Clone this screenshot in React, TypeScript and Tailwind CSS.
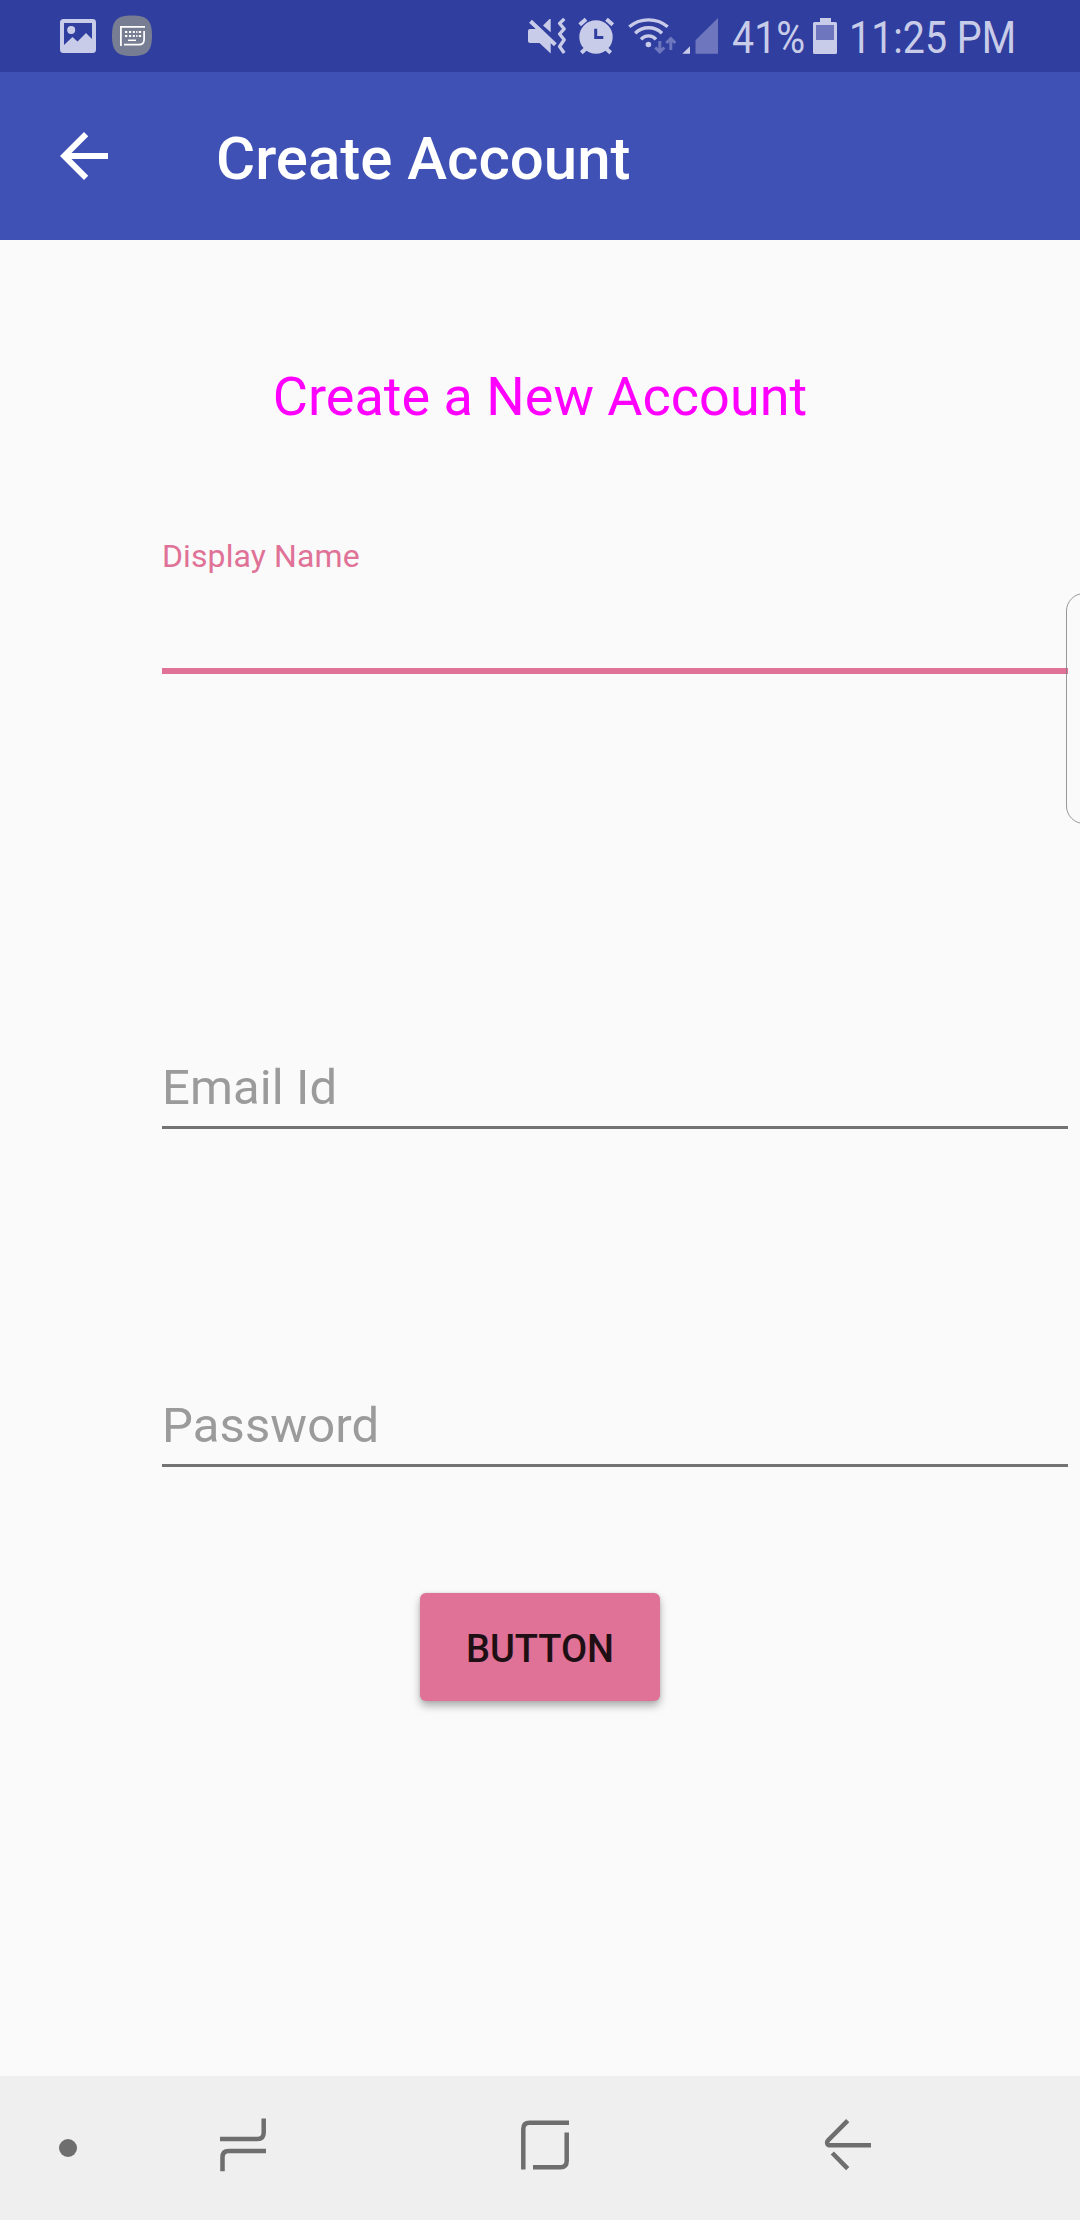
import React from "react";

const LIGHT = "#c9cce8";
const DIM = "#6e77bd";
const BAR = "#303f9f";
const GRAY = "#6e6e6e";

function StatusBar() {
  return (
    <header className="flex h-[72px] items-start bg-[#303f9f] pl-[60px] text-[#c9cce8]">
      <svg className="h-[72px] w-9 shrink-0" viewBox="60 0 36 72">
        <path
          fill={LIGHT}
          fillRule="evenodd"
          d="M63.500 19h29a3.500 3.500 0 0 1 3.500 3.500v27a3.500 3.500 0 0 1-3.500 3.500h-29a3.500 3.500 0 0 1-3.500-3.500v-27a3.500 3.500 0 0 1 3.500-3.500zM64 23v22l8.500-8 5 4.500 8.500-8.500 6 6v-16z"
        />
        <circle cx="71.200" cy="30" r="4" fill={LIGHT} />
      </svg>
      <svg className="ml-4 h-[72px] w-10 shrink-0" viewBox="112 0 40 72">
        <path
          fill="#777d92"
          d="M132 15.600C147 15.600 152 20.500 152 35.700C152 51 147 56 132 56C117 56 112 51 112 35.700C112 20.500 117 15.600 132 15.600Z"
        />
        <g fill="none" stroke="#fff" strokeWidth="1.700">
          <path d="M120.900 46V26.900H145" />
          <path d="M144.100 31v8.500q0 5.200-5.200 5.200H124" />
          <path d="M125 32h2.300m1.700 0h2.100m1.700 0h2m1.400 0h1.200m1.400 0h2.300M125 36h2.300m1.700 0h2.100m1.700 0h2m1.400 0h1.200m1.400 0h2.300" strokeWidth="2" />
          <path d="M128 40.300h8" strokeWidth="1.500" />
        </g>
      </svg>
      <svg className="ml-[374px] h-[72px] w-[40px] shrink-0" viewBox="526 0 40 72">
        <g fill={LIGHT}>
          <path d="M530 29h8.500L555 45.200 550.700 43v10.600L539.500 43H530a2 2 0 0 1-2-2V31a2 2 0 0 1 2-2z" />
          <path d="M543 25.500l6.500-6.600h1.200V32.300z" />
        </g>
        <path d="M530.500 21.200L555.300 44.800" stroke={LIGHT} strokeWidth="4" fill="none" />
        <path d="M564.300 18.800L559.600 23.500 564.200 28.800 559.600 34 564.200 39.800 559.600 46.500 564.200 53" stroke={LIGHT} strokeWidth="3.300" fill="none" strokeLinejoin="round" />
      </svg>
      <svg className="ml-[11px] h-[72px] w-[38px] shrink-0" viewBox="577 0 38 72">
        <circle cx="596" cy="37" r="16.700" fill={LIGHT} />
        <path d="M579.700 24.800l6.300-5.500M612.800 24.800l-6.300-5.500M581.300 52.800l5-4.500M610.700 52.800l-5-4.500" stroke={LIGHT} strokeWidth="4" />
        <path d="M595.700 28.700v8.900h7.600" stroke={BAR} strokeWidth="3" fill="none" />
      </svg>
      <svg className="ml-[12px] h-[72px] w-[50px] shrink-0" viewBox="627 0 50 72">
        <g fill="none" stroke={LIGHT} strokeWidth="3.400">
          <path d="M629.300 26.700a30.300 30.300 0 0 1 38.400 0" />
          <path d="M635.200 33.200a19.300 19.300 0 0 1 26.800 0" />
          <path d="M641 39.300a10 10 0 0 1 15 0" />
        </g>
        <circle cx="648.400" cy="44.500" r="2.800" fill={LIGHT} />
        <path d="M659.800 41v11M655.300 47.500l4.500 4.500 4.500-4.500M670.800 50V39M666.300 43l4.500-4.500 4.500 4.500" stroke={DIM} strokeWidth="3" fill="none" />
      </svg>
      <svg className="ml-[5px] h-[72px] w-9 shrink-0" viewBox="682 0 36 72">
        <path d="M682.300 53.800l7.700-7.500v7.500z" fill={LIGHT} />
        <path d="M695.500 53.800V40.300L718 18v35.800z" fill={DIM} />
      </svg>
      <div className="ml-[14px] h-[72px] w-[74px] origin-left scale-x-[0.875] whitespace-nowrap text-[45px] leading-[75px]">41%</div>
      <svg className="ml-[7px] h-[72px] w-6 shrink-0" viewBox="813 0 24 72">
        <path d="M820 18h11v4h4.500q1.500 0 1.500 1.500v29q0 1.500-1.500 1.500h-21q-1.500 0-1.500-1.500v-29q0-1.500 1.500-1.500h5.500z" fill={LIGHT} />
        <path d="M816 25h18v15h-18z" fill={DIM} />
      </svg>
      <div className="ml-[12px] h-[72px] w-[170px] origin-left scale-x-[0.875] whitespace-nowrap text-[45px] leading-[75px]">11:25 PM</div>
    </header>
  );
}

function Field({ label, className }: { label: string; className: string }) {
  return (
    <div className={`ml-[162px] w-[906px] border-b-[3px] border-[#737373] text-[49px] tracking-[0.1px] text-[#9b9b9b] ${className}`}>
      <div className="h-[82px] leading-[87px]">{label}</div>
    </div>
  );
}

function NavBar() {
  return (
    <nav className="flex h-36 bg-[#efefef] pl-[59px]">
      <svg className="h-36 w-[18px]" viewBox="59 2076 18 144">
        <circle cx="68" cy="2148" r="9" fill={GRAY} />
      </svg>
      <svg className="ml-[143px] h-36 w-[46px]" viewBox="220 2076 46 144" fill="none" stroke={GRAY} strokeWidth="4.500">
        <path d="M220 2139h37.500q6.200 0 6.200-6.200v-14.300M222.500 2171.200v-14q0-6.200 6.200-6.200H266" />
      </svg>
      <svg className="ml-[255px] h-36 w-[48px]" viewBox="521 2076 48 144" fill="none" stroke={GRAY} strokeWidth="4.500">
        <path d="M523.300 2169.400V2129q0-6.200 6.200-6.200H569M566.700 2132.500V2161q0 6.200-6.200 6.200H533" />
      </svg>
      <svg className="ml-[255px] h-36 w-[48px]" viewBox="824 2076 48 144" fill="none" stroke={GRAY} strokeWidth="4.500">
        <path d="M847.700 2120.700L828.300 2140.200c-2.200 2.300-1 5.100 1.700 5.100H871M832.300 2153l15.400 15.600" />
      </svg>
    </nav>
  );
}

export default function App() {
  return (
    <div className="relative flex h-[2220px] w-[1080px] flex-col overflow-hidden bg-[#fafafa] font-['Roboto',sans-serif]">
      <StatusBar />
      <div className="flex h-[168px] items-center bg-[#3f51b5] pl-12 text-white">
        <svg className="h-[72px] w-[72px]" viewBox="0 0 24 24" fill="currentColor">
          <path d="M20 11H7.830l5.590-5.590L12 4l-8 8 8 8 1.410-1.410L7.830 13H20z" />
        </svg>
        <h1 className="ml-24 pt-[5px] text-[60px] leading-[72px] font-medium">Create Account</h1>
      </div>
      <main className="flex flex-1 flex-col">
        <h2 className="mt-[121px] h-[72px] text-center text-[54px] leading-[72px] text-[#ff00ff]">Create a New Account</h2>
        <div className="mt-[103px] ml-[162px] h-[138px] w-[906px] border-b-[6px] border-[#e07297] text-[32px] leading-[40px] tracking-[0.1px] text-[#e07297]">
          Display Name
        </div>
        <Field label="Email Id" className="mt-[370px]" />
        <Field label="Password" className="mt-[253px]" />
        <button className="mt-[126px] h-[108px] w-60 self-center rounded-[6px] bg-[#e07297] pt-[5px] text-[38px] leading-[103px] font-medium text-[#1e0f14] shadow-[0_5px_8px_rgba(0,0,0,0.3),0_0_3px_rgba(0,0,0,0.12)]">
          BUTTON
        </button>
      </main>
      <NavBar />
      <div className="absolute top-[593px] left-[1066px] h-[231px] w-[40px] rounded-[18px] border border-[#808080]/80" />
    </div>
  );
}
